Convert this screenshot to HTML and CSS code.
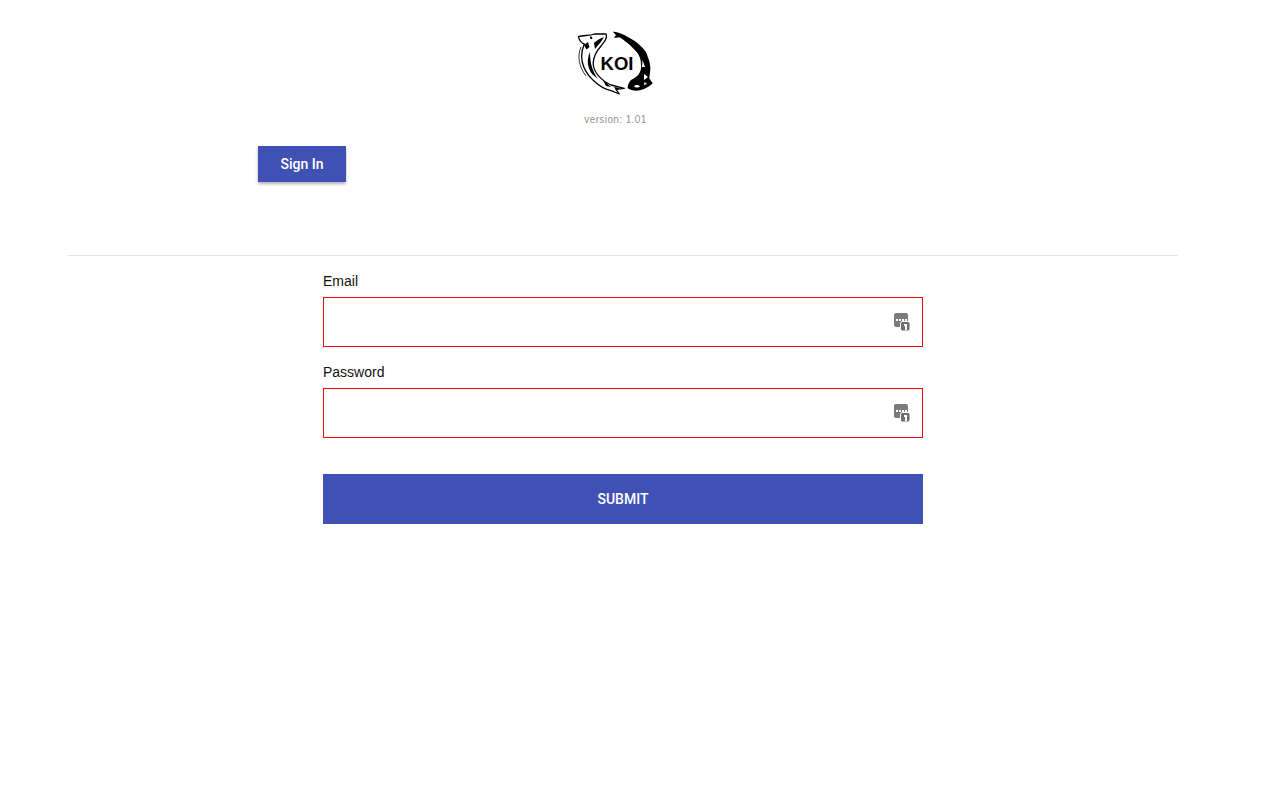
FILE: index.html
```html
<!DOCTYPE html>
<html lang="en">
<head>
    <meta charset="UTF-8">
    <meta name="viewport" content="width=device-width, initial-scale=1.0">
    <title>Koi</title>
    <link rel="stylesheet" href="styles.css">
</head>
<body>
    <div class="container">
        <header class="brand">
            <svg class="logo" width="76" height="66" viewBox="0 0 76 66">
                <!-- white fish, top left -->
                <path d="M0.3 6.7 C6 5 11.3 6 16.3 4 L28 4 C29.7 8.3 26.3 11.7 23 16 C18 21.7 14.7 28.3 15.3 35 C16.3 43.3 24.7 51.7 33 55 L46.3 58.3 L38 59.3 L41.3 64 L33 60.7 C21.3 58.3 9.7 46.7 5.7 36.7 C2.3 28.3 3 21.7 6.3 14 C3 13.3 1.3 10 0.3 6.7 Z" fill="#fff" stroke="#000" stroke-width="1.3" stroke-linejoin="round"/>
                <path d="M6 15 L10 12 L11.5 17 L8.5 19.5 Z M12 6.5 C14 6 15 7.5 14 9 C12.5 9.5 11.5 8 12 6.5 Z M16 13 C19 10 23 8 26 7 C24 11 21 14 17 19 Z" fill="#000"/>
                <path d="M12 22 C8 31 10 38 14 44 L20 49 C14 41 12 32 12 22 Z M25 50 L33 57 L28 56 Z M36 57 L42 58 L38 60 Z" fill="#000"/>
                <path d="M3 17 C-1 26 1 37 8 46" fill="none" stroke="#000" stroke-width="0.8"/>
                <!-- black fish, bottom right -->
                <path d="M34.7 1.7 C38 1.5 42 3 46.3 5 C51 8 56 10 59.7 13.3 C65 18 69 22 69.7 26.7 C72 32 72.5 36 72.3 40 L71.3 48.3 L74.7 53.3 C71 57 67 59 63 60 C58 61.5 53 60.5 49.7 58.3 C49.5 55 51 52 53 50 C57 48 60 46 61.3 43.3 C63 40 63.5 38 63 35 C63 30 62 27 59.7 23.3 C56 19 53 16 49.7 13.3 C46 10 42 7 38 5 Z" fill="#000"/>
                <path d="M38 5 L36 8 L44 7 Z" fill="#000"/>
                <path d="M66 44 L70 47 L66 50 Z M56 56 C58 54.5 61 55 62 56.5 C60 58 57.5 58 56 56 Z M64.5 30 L67 37 L64 37 Z M66.5 52 L69 54 L66 55 Z" fill="#fff"/>
                <text class="logo-text" x="39" y="40" text-anchor="middle">KOI</text>
            </svg>
            <p class="version">version: 1.01</p>
        </header>

        <button class="signin">Sign In</button>

        <hr class="divider">

        <form class="login">
            <label for="email">Email</label>
            <div class="field">
                <input type="text" id="email">
                <svg class="field-icon" width="16" height="19" viewBox="0 0 16 19">
                    <rect x="0" y="0" width="14" height="14" rx="2" fill="#7b7b7b"/>
                    <path d="M2 6h2v2H2z M5 6h2v2H5z M8 6h2v2H8z M11 6h2v2h-2z" fill="#fff"/>
                    <rect x="6.5" y="8.5" width="9.5" height="9.5" rx="2" fill="#6f6f6f" stroke="#fff"/>
                    <path d="M10 11h3v6h-2v-4h-1z" fill="#fff"/>
                </svg>
            </div>
            <label for="password">Password</label>
            <div class="field">
                <input type="password" id="password">
                <svg class="field-icon" width="16" height="19" viewBox="0 0 16 19">
                    <rect x="0" y="0" width="14" height="14" rx="2" fill="#7b7b7b"/>
                    <path d="M2 6h2v2H2z M5 6h2v2H5z M8 6h2v2H8z M11 6h2v2h-2z" fill="#fff"/>
                    <rect x="6.5" y="8.5" width="9.5" height="9.5" rx="2" fill="#6f6f6f" stroke="#fff"/>
                    <path d="M10 11h3v6h-2v-4h-1z" fill="#fff"/>
                </svg>
            </div>
            <button type="button" class="submit">SUBMIT</button>
        </form>
    </div>
</body>
</html>
```

FILE: styles.css
```css
body {
    font-family: "Liberation Sans", Arial, sans-serif;
    background-color: #fff;
    margin: 0;
}
.container {
    width: 1110px;
    margin-left: 68px;
}
.brand {
    display: flex;
    flex-direction: column;
    align-items: center;
    padding-top: 30px;
    margin-left: -15px;
}
.logo {
    display: block;
    margin-left: 1px;
}
.logo-text {
    font-family: "Liberation Sans", Arial, sans-serif;
    font-size: 18.5px;
    font-weight: bold;
    fill: #000;
}
.version {
    font-size: 10px;
    line-height: 12px;
    letter-spacing: 0.4px;
    color: #9a9088;
    margin: 18px 0 0 0;
}
.signin {
    display: block;
    width: 88px;
    height: 36px;
    margin: 20px 0 0 190px;
    background-color: #3f51b5;
    color: #fff;
    border: none;
    font-family: Roboto, sans-serif;
    font-size: 14px;
    font-weight: 500;
    box-shadow: 0 2px 3px rgba(0, 0, 0, 0.3);
    cursor: pointer;
}
.divider {
    border: none;
    border-top: 1px solid #e5e5e5;
    margin: 73px 0 0;
}
.login {
    width: 600px;
    margin: 16px auto 0;
}
label {
    display: block;
    font-size: 14px;
    line-height: 18px;
    color: #111;
    margin-bottom: 7px;
}
.field {
    position: relative;
    margin-bottom: 16px;
}
.field input {
    display: block;
    width: 100%;
    height: 50px;
    box-sizing: border-box;
    border: 1px solid #f00;
    padding: 0 40px 0 12px;
    outline: none;
}
.field-icon {
    position: absolute;
    right: 13px;
    top: 16px;
}
.submit {
    display: block;
    width: 100%;
    height: 50px;
    margin-top: 36px;
    background-color: #3f51b5;
    color: #fff;
    border: none;
    font-family: Roboto, sans-serif;
    font-size: 14px;
    font-weight: 500;
    cursor: pointer;
}
```
